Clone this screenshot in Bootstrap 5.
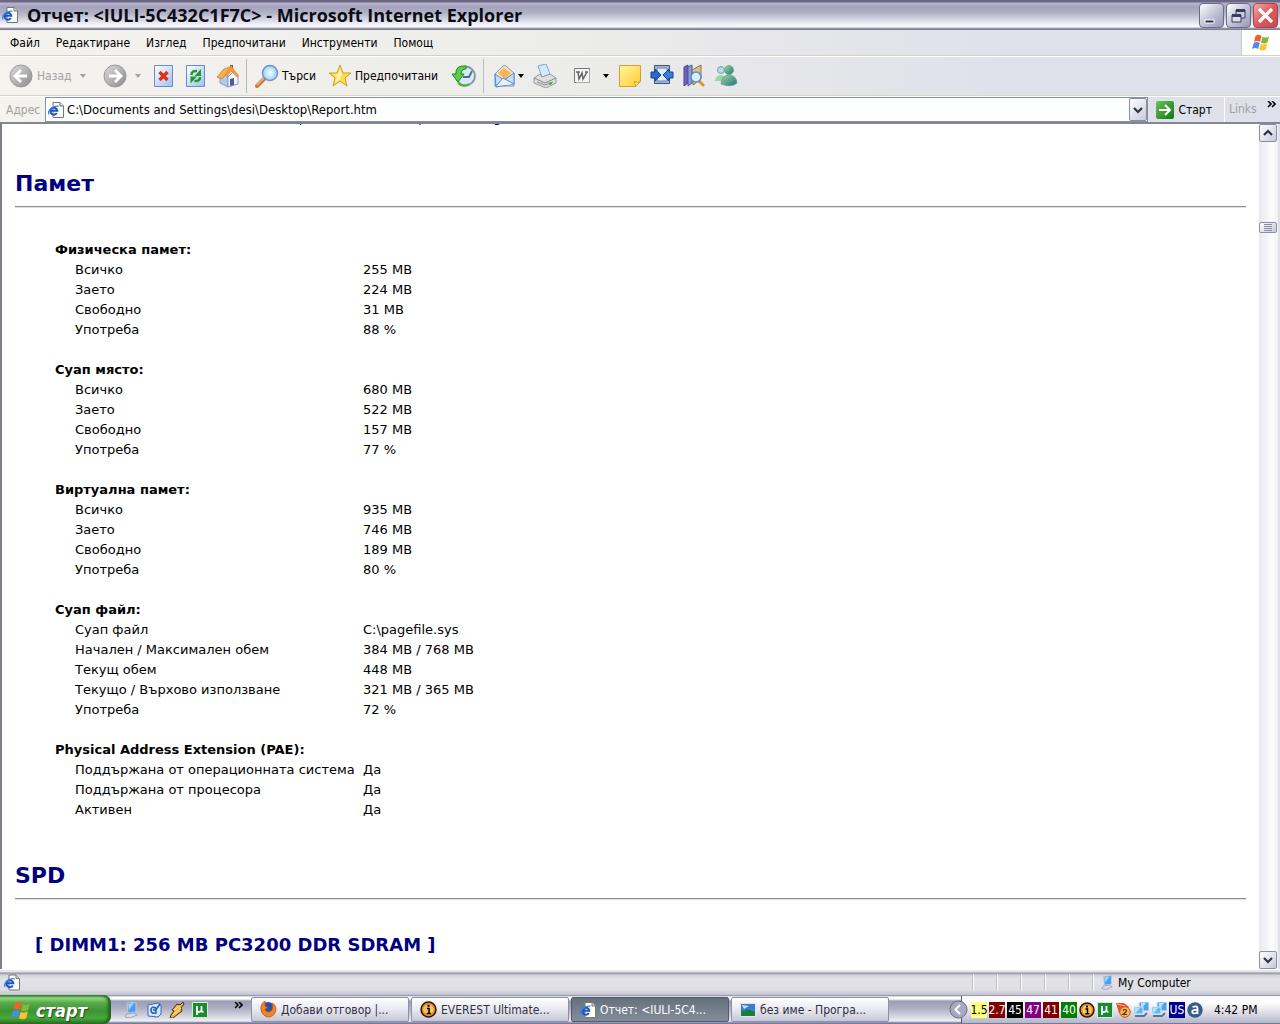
<!DOCTYPE html>
<html lang="bg">
<head>
<meta charset="utf-8">
<meta name="viewport" content="width=device-width, initial-scale=1">
<title>Отчет: &lt;IULI-5C432C1F7C&gt;</title>
<link rel="stylesheet" href="https://cdn.jsdelivr.net/npm/bootstrap@5.3.0/dist/css/bootstrap.min.css">
<style>
  body { font-family: "DejaVu Sans Condensed", "DejaVu Sans", sans-serif; font-size: 12px; line-height: 16px; color: #000; background: #e0e0e8; }
  button, input { font: inherit; color: inherit; }
  .bare { border: 0; background: none; padding: 0; display: flex; align-items: center; white-space: nowrap; }
  svg { display: block; flex: none; }

  /* title bar */
  .titlebar { height: 30px; padding: 0 2px; background: linear-gradient(#6b6785 0, #6b6785 2px, #b9b6cc 3px, #a5a2bd 7px, #b2b1c6 13px, #e4e4ee 22px, #fcfcff 27px, #a4a4b4 28px, #70708a 30px); }
  .titlebar h1 { font: 700 18px/24px "Open Sans", "Noto Sans", sans-serif; color: #0c0c14; padding-left: 9px; }
  .winbtns { gap: 2px; }
  .winbtn { width: 25px; height: 25px; padding: 0; border: 1px solid #6a6c8c; border-radius: 4px; background: linear-gradient(135deg, #fff, #c3c5d8 50%, #9698b4); display: flex; align-items: center; justify-content: center; }
  .winclose { background: linear-gradient(135deg, #f5aaa8, #dc5c5c 50%, #c24a50); border-color: #a44450; }

  /* menus and bars */
  .chrome { background: linear-gradient(90deg, #f4f3ee, #ececea 45%, #dfe0ea 80%); }
  .menurow { height: 26px; border-bottom: 1px solid #d4d2c8; }
  .menurow .nav { padding-left: 10px; }
  .menurow .nav-link { padding: 0; margin-right: 16px; color: #000; }
  .throbber { width: 39px; background: #fff; border-left: 1px solid #c9c9cf; }
  .toolrow { height: 40px; border-top: 1px solid #fff; border-bottom: 1px solid #d8d6cc; padding-left: 9px; }
  .vsep { width: 1px; height: 34px; background: #b9b9c4; flex: none; }
  .off { color: #a2a29f; }
  .tb-back { width: 94px; } .tb-fwd { width: 49px; } .tb { width: 32px; }
  .tb-home { width: 30px; } .tb-find { width: 73px; } .tb-fav { width: 124px; } .tb-hist { width: 31px; } .tb-wide { width: 41px; } .tb-word { width: 45px; gap: 12px; }
  .tb-find, .tb-fav { gap: 3px; }
  .caret-s { width: 0; border: 3px solid transparent; border-top: 4px solid currentColor; border-bottom: 0; }
  .addrrow { height: 26px; border-top: 1px solid #fff; }
  .addrrow label { width: 45px; padding-left: 6px; }
  .addrbox { border: 1px solid #7f90a8; background: #fff; height: 25px; padding-left: 2px; }
  .addrbox input { border: 0; outline: 0; background: none; padding: 0; font-size: 13px; margin-left: 3px; }
  .sbtn { width: 18px; height: 18px; border: 1px solid #8b8da6; border-radius: 2px; background: linear-gradient(135deg, #fff, #c9cad8); padding: 0; display: flex; align-items: center; justify-content: center; flex: none; }
  .dropbtn { height: 23px; }
  .linksbox { border-left: 1px solid #fff; width: 56px; }

  /* report */
  .viewport { border-top: 2px solid #848792; border-left: 2px solid #7d7f88; background: #fff; min-height: 0; }
  .report { font-family: "DejaVu Sans", sans-serif; font-size: 13px; line-height: 20px; padding: 0 13px; min-width: 0; }
  .clipline { height: 2px; margin-bottom: 43px; padding-left: 274px; display: flex; align-items: flex-end; color: #000080; line-height: 17px; }
  .report h2 { font-size: 22px; line-height: 30px; font-weight: 700; color: #000080; margin: 0; }
  .report h3 { font-size: 18px; line-height: 30px; font-weight: 700; color: #000080; margin: 0 0 0 20px; }
  .report hr { margin: 7px 0 32px; border-top: 1px solid #8e8e8e; border-bottom: 1px solid #e2e2e2; opacity: 1; }
  .report hr.tight { margin-bottom: 30px; }
  .report table { margin-left: 40px; margin-bottom: 41px; border-collapse: collapse; }
  .report td, .report th { padding: 0; height: 20px; }
  .report tbody + tbody::before { content: ""; display: block; height: 20px; }
  .report td:first-child { width: 308px; padding-left: 20px; }
  .scroller { width: 21px; background: #e0e0e8; padding-right: 2px; }
  .track { width: 19px; background: linear-gradient(90deg, #e8e8ee, #fdfdff 70%, #f2f2f6); }
  .thumb { height: 11px; margin-top: 80px; flex-direction: column; gap: 1px; }
  .thumb i { width: 8px; height: 1px; background: #8b8da6; }

  /* status bar */
  .status { height: 26px; border-top: 1px solid #fff; background: linear-gradient(#e6e6e8 0, #e6e6e8 2px, #8c8e98 3px, #d2d3da 5px, #e2e2e7 9px, #dddde4 20px, #c3c3cf); }
  .cell { width: 24px; height: 17px; border-left: 1px solid #fff; box-shadow: -1px 0 #bdbdc8; }
  .cell-zone { width: 187px; padding-left: 6px; }

  /* taskbar */
  .taskbar { height: 29px; background: linear-gradient(#77779a 0, #fff 2px, #fff 4px, #9c9db5 6px, #b0b1c5 14px, #d9d9e3 22px, #f0f0f5 26px, #77789a 28px); }
  .startbtn { width: 111px; height: 29px; border: 0; padding: 2px 0 0 10px; border-radius: 0 8px 8px 0; color: #fff; font: italic 700 18px/26px "DejaVu Sans Condensed", "DejaVu Sans", sans-serif; text-shadow: 1px 1px 1px #1d4b15; background: linear-gradient(#347c2e 0, #8fd87e 3px, #58a84a 8px, #3c9432 16px, #47a93b 23px, #2c6e25 29px); box-shadow: inset -3px 0 3px #1f641c; }
  .quick { width: 140px; padding-left: 12px; gap: 7px; }
  .chev { margin-left: 19px; }
  .tasks { gap: 2px; }
  .task { width: 158px; height: 25px; border: 1px solid #8e8fa9; border-radius: 2px; padding: 0 0 0 8px; color: #30303c; background: linear-gradient(#fff, #e8e8f0 50%, #c6c7d7); }
  .task span { overflow: hidden; text-overflow: ellipsis; }
  .task.on { color: #fff; background: linear-gradient(#66707c, #848d9a); border-color: #535c68; }
  .tray { height: 27px; background: linear-gradient(#f8f8fc, #fff 6px, #d9d9e4 18px, #b4b5c8); border-left: 1px solid #55566c; padding-left: 9px; }
  .traylist { gap: 2px; }
  .trayopen { left: -13px; top: 4px; }
  .clockbox { width: 77px; padding-left: 11px; }
  .temp { width: 16px; height: 16px; color: #fff; display: flex; justify-content: center; }
  .t-yel { background: #ffff80; color: #000; } .t-red { background: #800000; } .t-blk { background: #000; } .t-pur { background: #800080; } .t-grn { background: #008000; } .t-blue { background: #000090; }
</style>
<script src="https://cdn.jsdelivr.net/npm/bootstrap@5.3.0/dist/js/bootstrap.bundle.min.js"></script>
</head>
<body class="d-flex flex-column vh-100 overflow-hidden">

<svg width="0" height="0" class="position-absolute" aria-hidden="true">
  <defs>
    <linearGradient id="gGrey" x2="1" y2="1"><stop stop-color="#dcdcdc"/><stop offset="1" stop-color="#8b8b8b"/></linearGradient>
    <linearGradient id="gPage" x2="1" y2="1"><stop stop-color="#fff"/><stop offset="1" stop-color="#9cc0f4"/></linearGradient>
    <linearGradient id="gNote" x2="1" y2="1"><stop stop-color="#fff6a0"/><stop offset="1" stop-color="#ffcc33"/></linearGradient>
    <linearGradient id="gGo" x2="1" y2="1"><stop stop-color="#6cc05c"/><stop offset="1" stop-color="#0b7a12"/></linearGradient>
    <radialGradient id="gLens"><stop stop-color="#f6fdff"/><stop offset="1" stop-color="#9dd0f5"/></radialGradient>
    <linearGradient id="gMan" x2="1" y2="1"><stop stop-color="#a9dc7c"/><stop offset="1" stop-color="#1d6f9c"/></linearGradient>
    <symbol id="ie" viewBox="0 0 16 16"><path d="M5 .5h7l3.500 3.500v11.500H5z" fill="#fdfdf2" stroke="#777"/><path d="M12 .5v3.500h3.500" fill="#ddd" stroke="#777"/><path d="M2.500 8.700h6.800A3.500 3.500 0 1 0 8.800 11" fill="none" stroke="#1a56c4" stroke-width="2"/><path d="M1 12.500C-1 9 5 3 10.500 4.300" fill="none" stroke="#3a84e4" stroke-width="1.300"/></symbol>
    <symbol id="flag" viewBox="0 0 20 20"><path d="M4.500 3Q7.500.5 10.500 3L9 9Q6 7 3 9z" fill="#f0622a"/><path d="M11.500 3.500Q14.500 5.500 18 3.500L16.500 9.500Q13 11.500 10 9.500z" fill="#7cba3c"/><path d="M2.700 10Q5.700 8 8.700 10L7.200 16Q4.200 14 1 16z" fill="#4a8ce8"/><path d="M9.700 10.700Q12.700 12.500 16.200 10.500L14.700 16.500Q11.500 18.500 8.200 16.500z" fill="#fbc62c"/></symbol>
    <symbol id="pc" viewBox="0 0 16 16"><path d="M4 1l9-1v10l-8 1z" fill="#4f9de8" stroke="#b8cfe8"/><path d="M5 2l6-1-5 7z" fill="#9cd2ff"/><path d="M4 12l7-1 3 2-7 3-5-1z" fill="#d8dbe4" stroke="#7d8ea8" stroke-width=".7"/></symbol>
    <symbol id="net" viewBox="0 0 16 16"><path d="M6 0h10v9H6z" fill="#4ca4ec" stroke="#dce8f4"/><path d="M1 5h9v7H1z" fill="#63b6f6" stroke="#dce8f4"/><path d="M2 6h5l-4 5H2zM8 1h5l-3 4H8z" fill="#b4e0ff"/><path d="M2 14h9l3-3" fill="none" stroke="#59749c" stroke-width="1.800"/></symbol>
    <symbol id="mu" viewBox="0 0 16 16"><path d="M.5.500h15v15H.5z" fill="#1a8a35" stroke="#d4ecd4"/><path d="M5 13V4M5 8.500q0 1.500 1.700 1.500T9.500 8.500V4m0 4.500q0 1.500 2 1.300" fill="none" stroke="#fff" stroke-width="1.800"/></symbol>
    <symbol id="inf" viewBox="0 0 16 16"><circle cx="8" cy="8" r="7" fill="#f08a2c" stroke="#2b1608" stroke-width="1.500"/><circle cx="8" cy="8" r="4.800" fill="#ffc45c"/><path d="M6.500 7h2v4.500M6.300 11.700h4" fill="none" stroke="#000" stroke-width="1.500"/><path d="M7 3.500h2v2H7z"/></symbol>
  </defs>
</svg>

<header>
  <div class="titlebar d-flex align-items-center">
    <svg width="16" height="16"><use href="#ie"/></svg>
    <h1 class="m-0 flex-fill text-truncate">Отчет: &lt;IULI-5C432C1F7C&gt; - Microsoft Internet Explorer</h1>
    <div class="winbtns d-flex flex-shrink-0">
      <button class="winbtn" type="button" aria-label="Minimize"><svg width="19" height="19"><path d="M3 14h9v3H3z" fill="#2b2d4d" stroke="#fff"/></svg></button>
      <button class="winbtn" type="button" aria-label="Restore"><svg width="19" height="19"><path d="M7 4h9v8H7z" fill="#c9cbdc" stroke="#393b5c"/><path d="M7 4.500h9" stroke="#393b5c" stroke-width="3"/><path d="M3 9h9v7H3z" fill="#dcdde8" stroke="#393b5c"/><path d="M3 9.500h9" stroke="#393b5c" stroke-width="3"/></svg></button>
      <button class="winbtn winclose" type="button" aria-label="Close"><svg width="19" height="19"><path d="M3 3l13 13M16 3L3 16" stroke="#fff" stroke-width="3.200"/></svg></button>
    </div>
  </div>

  <div class="chrome">
    <nav class="menurow d-flex">
      <div class="nav flex-nowrap align-items-center flex-fill">
        <a class="nav-link" href="#">Файл</a><a class="nav-link" href="#">Редактиране</a><a class="nav-link" href="#">Изглед</a><a class="nav-link" href="#">Предпочитани</a><a class="nav-link" href="#">Инструменти</a><a class="nav-link" href="#">Помощ</a>
      </div>
      <div class="throbber d-flex align-items-center justify-content-center"><svg width="20" height="20"><use href="#flag"/></svg></div>
    </nav>

    <div class="toolrow d-flex align-items-center">
      <button class="bare tb-back off" type="button"><svg width="24" height="24"><circle cx="12" cy="12" r="11" fill="url(#gGrey)" stroke="#999"/><path d="M18 12H7m5-6l-6 6 6 6" fill="none" stroke="#fff" stroke-width="2.800"/></svg><span class="ps-1">Назад</span><i class="caret-s ms-2"></i></button>
      <button class="bare tb-fwd off" type="button" aria-label="Напред"><svg width="24" height="24"><circle cx="12" cy="12" r="11" fill="url(#gGrey)" stroke="#999"/><path d="M6 12h11m-5-6l6 6-6 6" fill="none" stroke="#fff" stroke-width="2.800"/></svg><i class="caret-s ms-2"></i></button>
      <button class="bare tb" type="button" aria-label="Стоп"><svg width="24" height="24"><path d="M2.500 1.500h18v21h-18z" fill="url(#gPage)" stroke="#6c8cc8"/><path d="M7.500 8l8 8M15.500 8l-8 8" stroke="#e03018" stroke-width="3.200"/></svg></button>
      <button class="bare tb" type="button" aria-label="Обнови"><svg width="24" height="24"><path d="M2.500 1.500h18v21h-18z" fill="url(#gPage)" stroke="#6c8cc8"/><path d="M7.500 11q0-4.500 5.500-4" fill="none" stroke="#1e9a28" stroke-width="2.500"/><path d="M17 5v7h-6.500z" fill="#1e9a28"/><path d="M16 13q0 4.500-5.500 4" fill="none" stroke="#1e9a28" stroke-width="2.500"/><path d="M6.500 19.500v-7H13z" fill="#1e9a28"/></svg></button>
      <button class="bare tb-home" type="button" aria-label="Начало"><svg width="24" height="24"><path d="M4 11v8l8 4V12z" fill="#b4caf0" stroke="#8a9cc4"/><path d="M12 13l6-6 4 6v7l-10 3z" fill="#f4f6fc" stroke="#8a9cc4"/><path d="M14 15l4-1v7l-4 1z" fill="#4c5c94"/><path d="M14 1h3v4h-3z" fill="#a83c2c"/><path d="M1 13l7-8 8-3-7 9-3 4z" fill="#f6b050" stroke="#d88c38"/><path d="M15 2l8 10-2 1-6-6-4 6-2-2z" fill="#f09c3c" stroke="#d88c38" stroke-width=".6"/></svg></button>
      <i class="vsep me-2"></i>
      <button class="bare tb-find" type="button"><svg width="24" height="24"><path d="M9 15l-7 7" stroke="#c77a3c" stroke-width="4" stroke-linecap="round"/><path d="M9 14l-7 7" stroke="#f4bc84" stroke-width="1.500"/><circle cx="15" cy="9" r="7.500" fill="url(#gLens)" stroke="#6b94cc" stroke-width="1.500"/></svg><span>Търси</span></button>
      <button class="bare tb-fav" type="button"><svg width="24" height="24"><path d="M12 1l3 8h8l-6 5 2 8-7-5-7 5 2-8-6-5h8z" fill="#ffdc4c" stroke="#d99a20"/><path d="M12 4l2 6-2 5-5 4 2-6-4-3h5z" fill="#fff3a8"/></svg><span>Предпочитани</span></button>
      <button class="bare tb-hist" type="button" aria-label="Хронология"><svg width="24" height="24"><circle cx="13.500" cy="12" r="9.500" fill="#d8e8f6" stroke="#7d98a4" stroke-width="1.800"/><path d="M11 13h6l3-6" stroke="#4c6c94" stroke-width="1.800" fill="none"/><path d="M14 2Q3 1 4 10H0l6 8 6-8H9q0-5 5-5z" fill="#5ccc4c" stroke="#1e8a20"/><path d="M6 19q5 5 11 1" stroke="#4cb43c" stroke-width="2" fill="none"/></svg></button>
      <i class="vsep me-2"></i>
      <button class="bare tb-wide" type="button" aria-label="Поща"><svg width="26" height="24"><path d="M3 10l8-8q2-1 3 0l8 7v13H3z" fill="#ffe7a8" stroke="#7a8fd8"/><path d="M6 9l6-5 7 5-6 6z" fill="#f6b45c"/><path d="M3 10l9 6 10-7v11L4 23z" fill="#bfe0fa" stroke="#5c84d0"/><path d="M4 22l7-8 11 6" fill="#e4f4ff" stroke="#5c84d0"/></svg><i class="caret-s"></i></button>
      <button class="bare" type="button" aria-label="Печат"><svg width="24" height="24"><path d="M5 2l8-2 4 10-8 3z" fill="#d4eaff" stroke="#7da4d8"/><path d="M1 14l6-4 2 3 8-3 6 4v5l-10 5-12-5z" fill="#dedede" stroke="#999"/><path d="M1 14l11 5 11-5M4 18l8 3 8-3" fill="none" stroke="#888"/><path d="M16 20l3-1" stroke="#39ad39" stroke-width="2"/></svg></button>
      <button class="bare tb-word ms-3" type="button" aria-label="Редактиране в Word"><svg width="18" height="18"><path d="M1.500 1.500h15v14h-15z" fill="#f5f5f5" stroke="#777"/><path d="M3 15.500h13.500V3" fill="none" stroke="#aaa"/><path d="M5 5l1 7 3-6 1 6 4-7M3 5h4M12 5h3" fill="none" stroke="#666" stroke-width="1.500"/></svg><i class="caret-s"></i></button>
      <button class="bare tb" type="button" aria-label="Бележка"><svg width="24" height="24"><path d="M1.500 1.500h21v16l-5 5h-16z" fill="url(#gNote)" stroke="#d0a030"/><path d="M17.500 22.500l-1-5q3 2 6 0z" fill="#ffe680" stroke="#d0a030"/></svg></button>
      <button class="bare tb" type="button" aria-label="Синхронизиране"><svg width="24" height="24"><path d="M4.500 1.500h15v18h-15z" fill="#9cb8dc" stroke="#44546c"/><path d="M7 4h10v13H7z" fill="#dcecff" stroke="#6c84ac"/><path d="M1 8h4V5l6 6-6 6v-3H1z" fill="#2c68c4" stroke="#1a4490"/><path d="M23 8h-4V5l-6 6 6 6v-3h4z" fill="#3c7cdc" stroke="#1a4490"/></svg></button>
      <button class="bare tb" type="button" aria-label="Справки"><svg width="24" height="24"><path d="M2 3l4-2v18l-4 3z" fill="#6c64b4" stroke="#4c4490"/><path d="M6 3l4-2v18l-4 3z" fill="#8c9cdc" stroke="#4c54a0"/><path d="M10 6l9-5v14l-8 6z" fill="#d4c48c" stroke="#8c743c"/><path d="M16 16l6 6" stroke="#d09a28" stroke-width="3"/><circle cx="14" cy="13" r="5" fill="#d4f0ff" stroke="#5c8cc4" stroke-width="1.500"/></svg></button>
      <button class="bare tb" type="button" aria-label="Messenger"><svg width="24" height="24"><circle cx="7" cy="6" r="3.500" fill="#b4dce4" stroke="#6ca4b4"/><path d="M1 17q1-6 6-6 5 1 5 6z" fill="#9cd4a4"/><circle cx="15" cy="6" r="4.500" fill="url(#gMan)" stroke="#5ca484" stroke-width=".8"/><path d="M7 20q1-9 8-9 7 0 8 8-5 5-16 1z" fill="url(#gMan)" stroke="#5c9ca4" stroke-width=".8"/></svg></button>
    </div>

    <form class="addrrow d-flex align-items-center">
      <label for="address" class="off">Адрес</label>
      <div class="addrbox d-flex align-items-center flex-fill">
        <svg width="16" height="16"><use href="#ie"/></svg>
        <input id="address" class="flex-fill" type="text" value="C:\Documents and Settings\desi\Desktop\Report.htm">
        <button class="sbtn dropbtn" type="button" aria-label="Списък"><svg width="10" height="8"><path d="M1 2l4 4 4-4" fill="none" stroke="#30324c" stroke-width="2.200"/></svg></button>
      </div>
      <button class="bare ms-2 me-2 pe-1" type="button"><svg width="18" height="18"><rect width="18" height="18" rx="2" fill="url(#gGo)"/><path d="M3 9h11M9 4l5 5-5 5" fill="none" stroke="#fff" stroke-width="2"/></svg><span class="ps-1">Старт</span></button>
      <div class="linksbox d-flex align-items-start h-100 ps-1"><span class="off pt-1 flex-fill">Links</span><svg class="mt-1 me-1" width="9" height="7"><path d="M1 0l3 3-3 3M5 0l3 3-3 3" fill="none" stroke="#000" stroke-width="1.600"/></svg></div>
    </form>
  </div>
</header>

<div class="viewport d-flex flex-fill">
  <main class="report flex-fill overflow-hidden">
    <div class="clipline"><span>Предложение: ъпгрейд, timings,</span></div>
    <h2>Памет</h2>
    <hr>
    <table>
      <tbody><tr><th colspan="2">Физическа памет:</th></tr><tr><td>Всичко</td><td>255 MB</td></tr><tr><td>Заето</td><td>224 MB</td></tr><tr><td>Свободно</td><td>31 MB</td></tr><tr><td>Употреба</td><td>88 %</td></tr></tbody>
      <tbody><tr><th colspan="2">Суап място:</th></tr><tr><td>Всичко</td><td>680 MB</td></tr><tr><td>Заето</td><td>522 MB</td></tr><tr><td>Свободно</td><td>157 MB</td></tr><tr><td>Употреба</td><td>77 %</td></tr></tbody>
      <tbody><tr><th colspan="2">Виртуална памет:</th></tr><tr><td>Всичко</td><td>935 MB</td></tr><tr><td>Заето</td><td>746 MB</td></tr><tr><td>Свободно</td><td>189 MB</td></tr><tr><td>Употреба</td><td>80 %</td></tr></tbody>
      <tbody><tr><th colspan="2">Суап файл:</th></tr><tr><td>Суап файл</td><td>C:\pagefile.sys</td></tr><tr><td>Начален / Максимален обем</td><td>384 MB / 768 MB</td></tr><tr><td>Текущ обем</td><td>448 MB</td></tr><tr><td>Текущо / Върхово използване</td><td>321 MB / 365 MB</td></tr><tr><td>Употреба</td><td>72 %</td></tr></tbody>
      <tbody><tr><th colspan="2">Physical Address Extension (PAE):</th></tr><tr><td>Поддържана от операционната система</td><td>Да</td></tr><tr><td>Поддържана от процесора</td><td>Да</td></tr><tr><td>Активен</td><td>Да</td></tr></tbody>
    </table>
    <h2>SPD</h2>
    <hr class="tight">
    <h3>[ DIMM1: 256 MB PC3200 DDR SDRAM ]</h3>
  </main>
  <div class="scroller">
    <div class="track d-flex flex-column h-100">
      <button class="sbtn" type="button" aria-label="Нагоре"><svg width="10" height="8"><path d="M1 6l4-4 4 4" fill="none" stroke="#30324c" stroke-width="2.200"/></svg></button>
      <button class="sbtn thumb" type="button" aria-label="Плъзгач"><i></i><i></i><i></i><i></i></button>
      <button class="sbtn mt-auto" type="button" aria-label="Надолу"><svg width="10" height="8"><path d="M1 2l4 4 4-4" fill="none" stroke="#30324c" stroke-width="2.200"/></svg></button>
    </div>
  </div>
</div>

<footer>
  <div class="status d-flex align-items-end pb-1">
    <div class="flex-fill ps-1"><svg width="16" height="17"><use href="#ie"/></svg></div>
    <i class="cell"></i><i class="cell"></i><i class="cell"></i><i class="cell"></i><i class="cell"></i>
    <div class="cell cell-zone d-flex align-items-center"><svg width="14" height="15"><use href="#pc"/></svg><span class="ps-1">My Computer</span></div>
  </div>
  <div class="taskbar d-flex align-items-center">
    <button class="startbtn d-flex align-items-center" type="button"><svg width="22" height="22"><use href="#flag"/></svg><span class="ps-1">старт</span></button>
    <div class="quick d-flex align-items-center">
      <svg width="16" height="16"><use href="#pc"/></svg>
      <svg width="16" height="16"><path d="M2 3l10-2 3 2v9l-3 3-10-1z" fill="#d4e8fc" stroke="#3c6cac"/><path d="M10 6Q5 4 5 8t5 3V8H7M9 9l5-7" fill="none" stroke="#1e62b8" stroke-width="1.600"/></svg>
      <svg width="16" height="16"><path d="M8 2l3 1 3-3 1 2-3 4 1 3-4 3-5 4H1l1-3 3-4-2-1z" fill="#f6b43c" stroke="#3c2c14"/><path d="M5 8l6-4M4 13l8-7" stroke="#fff0b0"/></svg>
      <svg width="16" height="16"><use href="#mu"/></svg>
      <svg class="chev mb-2" width="9" height="7"><path d="M1 0l3 3-3 3M5 0l3 3-3 3" fill="none" stroke="#000" stroke-width="1.600"/></svg>
    </div>
    <div class="d-flex flex-fill tasks">
      <button class="bare task" type="button"><svg width="17" height="17"><circle cx="8" cy="8" r="7" fill="#2c50a4"/><path d="M5 0Q0 3 1 9q2 7 8 7 7-1 7-9-1-4-4-5 2 8-3 9-4 0-4-3l3-1-3-2z" fill="#f08428" stroke="#b84c14" stroke-width=".7"/></svg><span class="ps-1">Добави отговор |...</span></button>
      <button class="bare task" type="button"><svg width="17" height="17"><use href="#inf"/></svg><span class="ps-1">EVEREST Ultimate...</span></button>
      <button class="bare task on" type="button"><svg width="16" height="16"><use href="#ie"/></svg><span class="ps-1">Отчет: &lt;IULI-5C4...</span></button>
      <button class="bare task" type="button"><svg width="16" height="16"><path d="M.5 1.500h15v13H.5z" fill="#3c7cd0" stroke="#e4e4ec"/><path d="M1 14V8q3 3 6-1l8 3v4z" fill="#1c7c38"/><path d="M2 3l7 1-5 3z" fill="#bce0ff"/></svg><span class="ps-1">без име - Програ...</span></button>
    </div>
    <div class="tray position-relative d-flex align-items-center">
      <button class="bare trayopen position-absolute" type="button" aria-label="Покажи скритите икони"><svg width="19" height="19"><circle cx="9.500" cy="9.500" r="8.500" fill="#a9aac0" stroke="#686984"/><path d="M11 5L6.500 9.500 11 14" fill="none" stroke="#fff" stroke-width="2"/></svg></button>
      <div class="d-flex align-items-center traylist">
        <div class="temp t-yel">1.5</div><div class="temp t-red">2.7</div><div class="temp t-blk">45</div><div class="temp t-pur">47</div><div class="temp t-red">41</div><div class="temp t-grn">40</div>
        <svg width="16" height="16"><use href="#inf"/></svg>
        <svg width="16" height="16"><use href="#mu"/></svg>
        <svg width="16" height="16"><path d="M1 1h8l5 4-4 7-6-1z" fill="#e8502c"/><path d="M2 2l8 2" stroke="#ffc0a0"/><circle cx="10" cy="10" r="5.300" fill="#f8b458" stroke="#c45c1c"/><path d="M8 8.500q2-2 3.500 0 0 1-3.500 4h4" fill="none" stroke="#5c2c08" stroke-width="1.200"/></svg>
        <svg width="16" height="16"><use href="#net"/></svg>
        <svg width="16" height="16"><use href="#net"/></svg>
        <div class="temp t-blue">US</div>
        <svg width="16" height="16"><circle cx="8" cy="8" r="7.700" fill="#385c88"/><path d="M5.500 5q5-2 5 1.500V12M10 8Q5 7.500 5.200 10.200 6 12.500 10 10.500" fill="none" stroke="#fff" stroke-width="1.800"/></svg>
      </div>
      <time class="clockbox">4:42 PM</time>
    </div>
  </div>
</footer>
</body>
</html>
